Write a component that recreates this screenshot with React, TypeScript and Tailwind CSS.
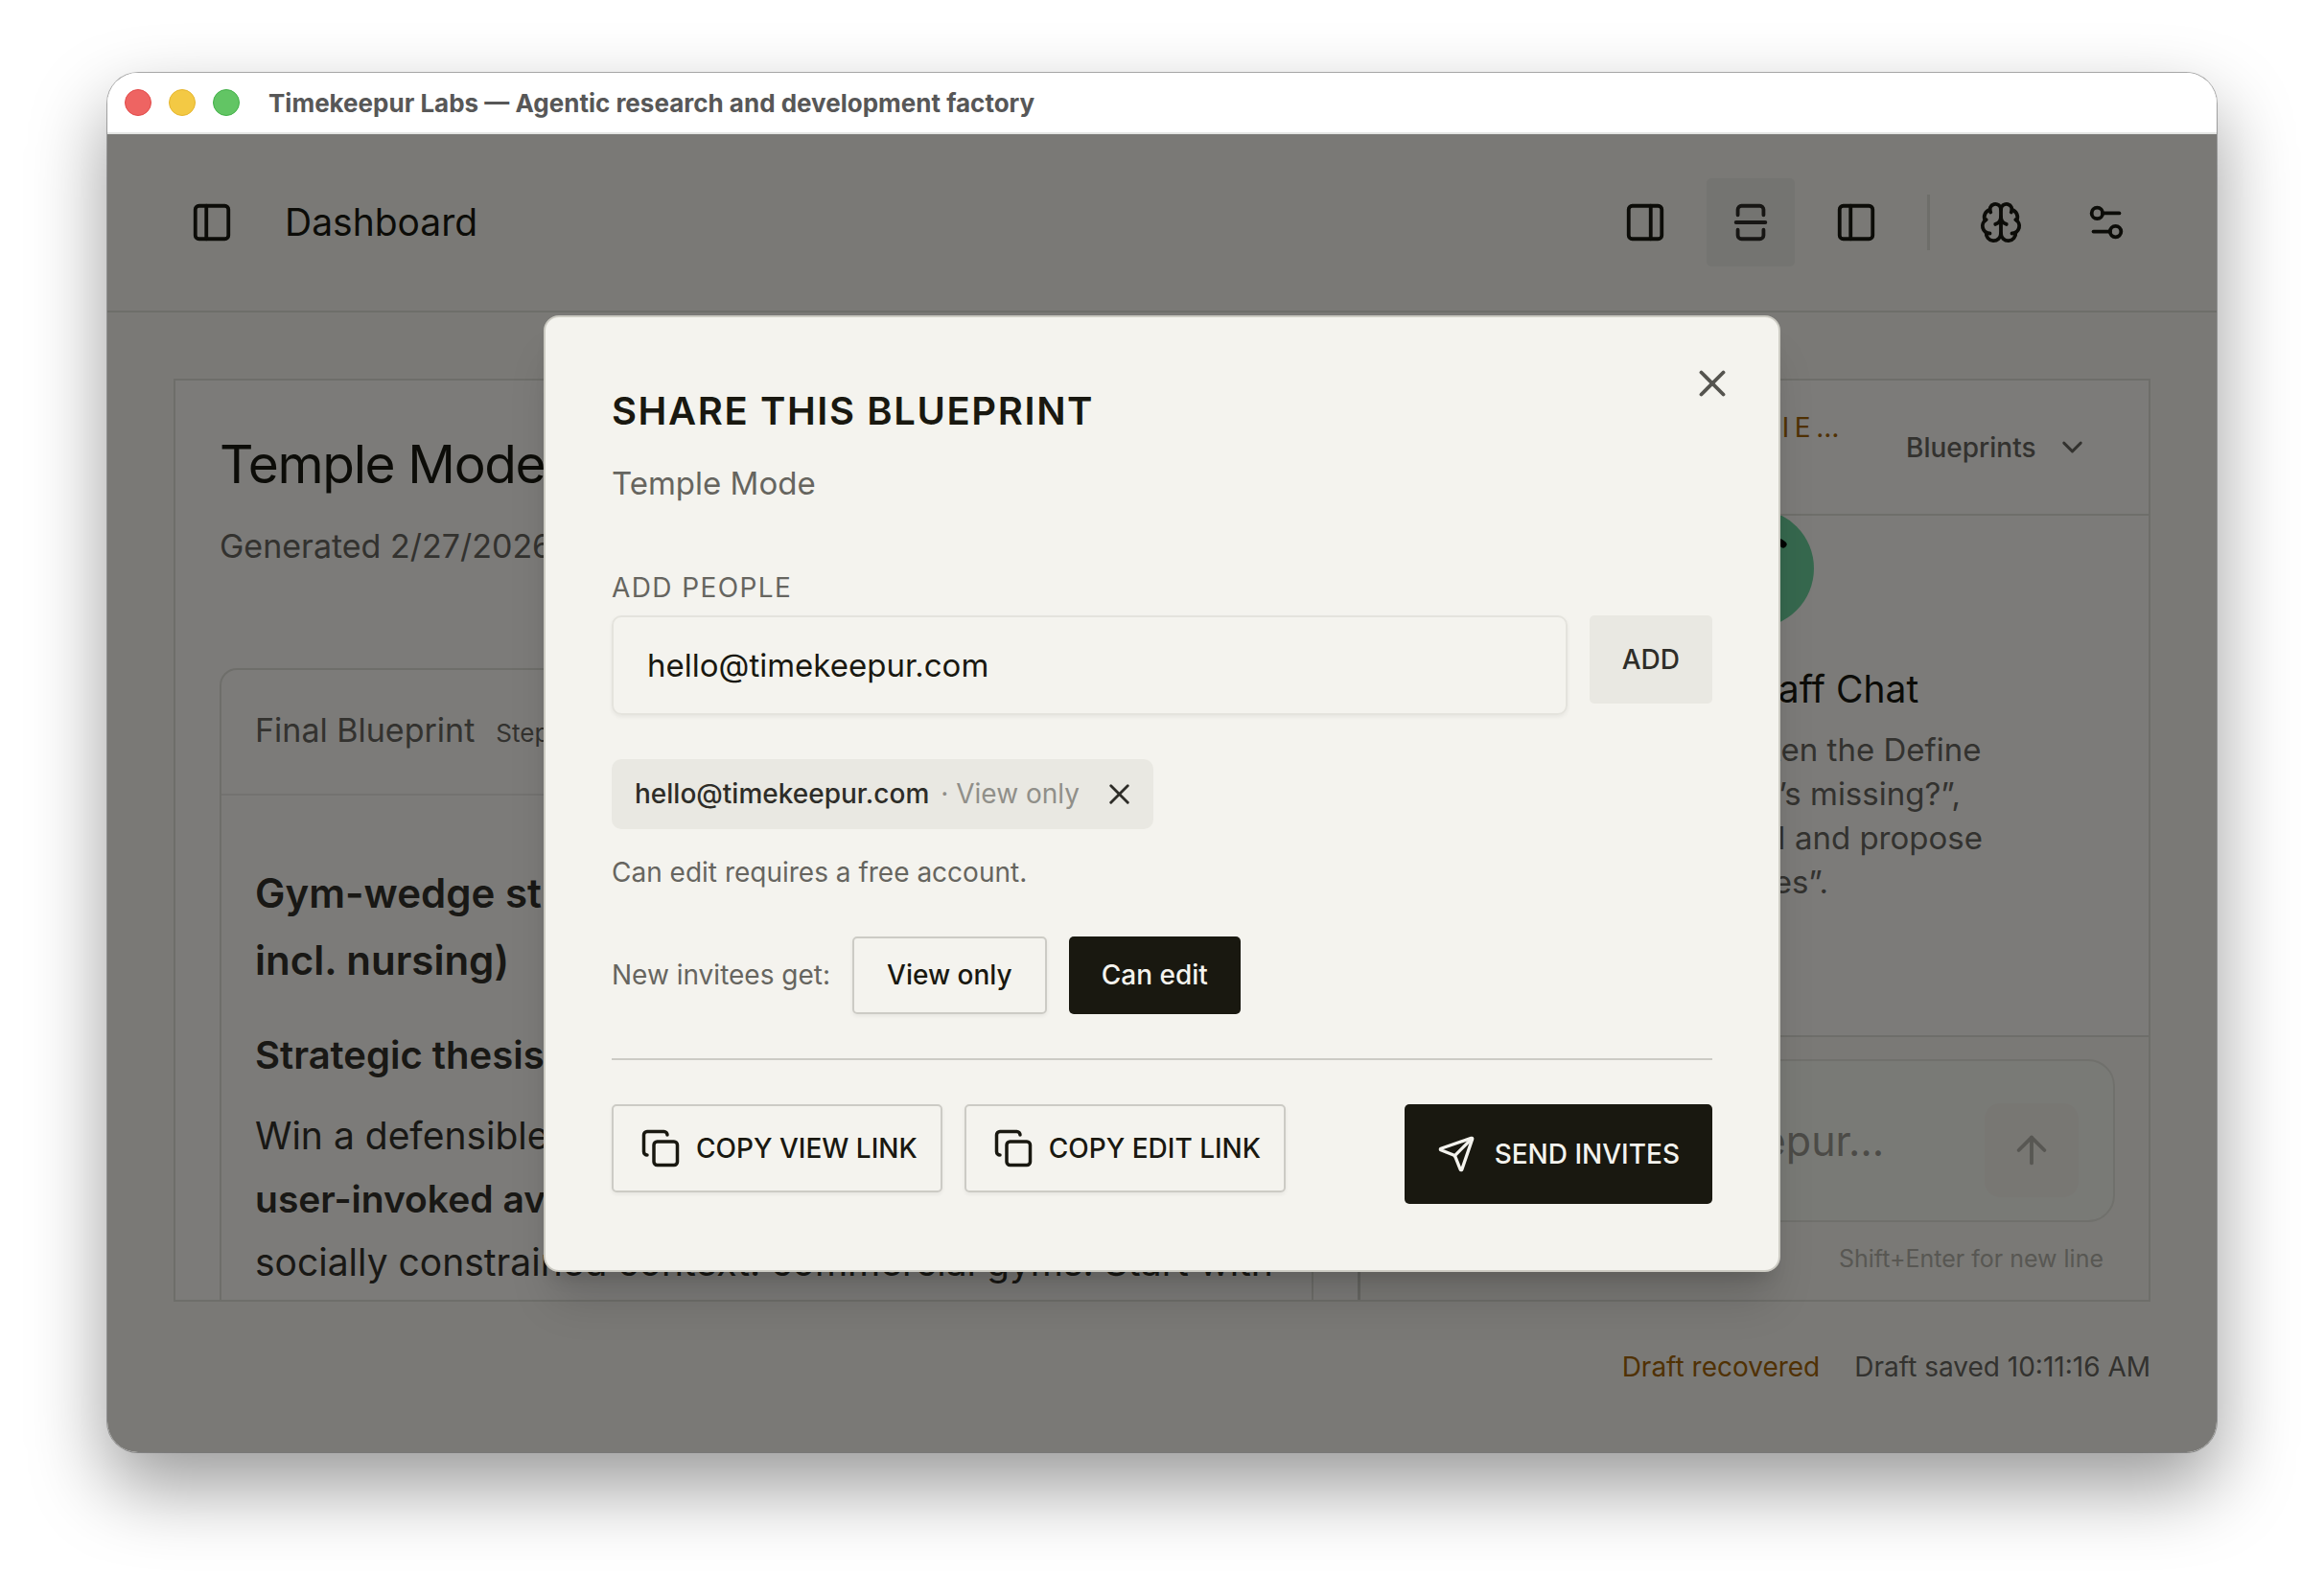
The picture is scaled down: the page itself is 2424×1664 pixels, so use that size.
import React, { useState } from 'react';
import {
  ArrowUp,
  Brain,
  ChevronDown,
  Copy,
  PanelLeft,
  PanelRight,
  Send,
  Settings2,
  SquareSplitVertical,
  X
} from 'lucide-react';

const TitleBar = () => (
  <div className="flex h-16 shrink-0 items-center border-b-2 border-[#e4e5e3] bg-white pl-[18px]">
    <div className="flex gap-[18px]">
      <span className="size-7 rounded-full border border-[#e24b4a] bg-[#ee6462]"></span>
      <span className="size-7 rounded-full border border-[#e5b52e] bg-[#f3c944]"></span>
      <span className="size-7 rounded-full border border-[#43b049] bg-[#62c564]"></span>
    </div>
    <p className="ml-[30px] text-[26px] font-bold text-[#575757]">
      Timekeepur Labs — Agentic research and development factory
    </p>
  </div>
);

const IconButton = ({ icon: Icon, label, active }: any) => (
  <button
    aria-label={label}
    className={`flex size-[92px] items-center justify-center rounded-[5px] ${active ? 'bg-[#e9e8e2] text-[#2e2d28]' : 'text-[#191810]'}`}
  >
    <Icon size={46} />
  </button>
);

const Header = () => (
  <header className="flex h-[186px] shrink-0 items-center justify-between border-b-2 border-[#dddcd5] pl-[63px] pr-[69px]">
    <div className="flex items-center gap-[30px]">
      <IconButton icon={PanelLeft} label="Toggle sidebar" />
      <h1 className="text-[39px] text-[#191810]">Dashboard</h1>
    </div>
    <div className="flex items-center gap-[18px]">
      <IconButton icon={PanelRight} label="Show right panel" />
      <IconButton icon={SquareSplitVertical} label="Split view" active />
      <IconButton icon={PanelLeft} label="Show left panel" />
      <span className="mx-[10px] h-[58px] w-[3px] bg-[#dddcd5]"></span>
      <IconButton icon={Brain} label="Memory" />
      <IconButton icon={Settings2} label="Settings" />
    </div>
  </header>
);

const Blueprint = () => (
  <section className="flex min-h-0 flex-col overflow-hidden px-[46px] pt-[55px]">
    <h2 className="text-[55px] leading-[64px] tracking-tight text-[#191810]">Temple Mode</h2>
    <p className="mt-[31px] text-[34px] leading-[46px] text-[#66655f]">Generated 2/27/2026</p>

    <div className="mt-[104px] min-h-0 flex-1 overflow-hidden rounded-t-[18px] border-2 border-b-0 border-[#dddcd5]">
      <div className="flex items-baseline gap-[22px] border-b-2 border-[#e6e5e0] px-[35px] py-10 leading-[46px] text-[#66655f]">
        <span className="text-[34px]">Final Blueprint</span>
        <span className="text-[26px]">Step 4</span>
      </div>
      <div className="px-[35px] pt-[67px] text-[#32312a]">
        <h3 className="text-[42px] font-semibold leading-[70px]">
          <span className="block">Gym-wedge strategy (prayer,</span>
          <span className="block">incl. nursing)</span>
        </h3>
        <h4 className="mt-[34px] text-[40px] font-semibold leading-[60px]">Strategic thesis</h4>
        <p className="mt-[21px] whitespace-nowrap text-[39px] leading-[66px]">
          <span className="block">Win a defensible wedge with a</span>
          <strong className="block font-semibold">user-invoked avatar</strong>
          <span className="block">socially constrained context: commercial gyms. Start with</span>
        </p>
      </div>
    </div>
  </section>
);

const StaffAvatar = () => (
  <svg viewBox="0 0 124 124" className="size-[124px] shrink-0" fill="none" aria-hidden="true">
    <circle cx="62" cy="62" r="62" fill="#6cd09c" />
    <path d="M68 35c7-4 17-4 24 2" stroke="#000" strokeWidth="7" strokeLinecap="round" />
    <path d="M31 37c7-6 17-6 24-2" stroke="#000" strokeWidth="7" strokeLinecap="round" />
  </svg>
);

const StaffChat = () => (
  <section className="flex min-h-0 flex-col border-l-3 border-[#cfcec6]">
    <div className="flex h-[141px] shrink-0 items-center gap-16 border-b-2 border-[#dddcd5] pl-9 pr-[62px]">
      <div className="min-w-0 flex-1 text-right">
        <p className="text-[28px] leading-10 tracking-[0.2em] text-[#a16207]">ARCHIE…</p>
        <div className="h-[42px]"></div>
      </div>
      <label className="flex items-center gap-5 text-[#66655f]">
        <select aria-label="Section" className="appearance-none bg-transparent text-[28px] font-medium">
          <option>Blueprints</option>
        </select>
        <ChevronDown size={35} />
      </label>
    </div>

    <div className="flex min-h-0 flex-1 flex-col items-center justify-center overflow-hidden">
      <div className="flex flex-col items-center pb-[144px] text-center">
        <StaffAvatar />
        <h3 className="mt-9 text-[39px] leading-[56px] text-[#191810]">Chief of Staff Chat</h3>
        <p className="mt-3 text-[33px] leading-[46px] text-[#66655f]">
          <span className="block">Ask them to tighten the Define</span>
          <span className="block">sections, “what’s missing?”,</span>
          <span className="block">then “critique v1.1 and propose</span>
          <span className="block">changes”.</span>
        </p>
      </div>
    </div>

    <div className="h-[276px] shrink-0 border-t-2 border-[#dddcd5] bg-[#f4f3ec] px-[35px] pt-[23px]">
      <div className="flex h-[170px] items-center rounded-[28px] border-2 border-[#e0e0d8] bg-[#f3f5ed] px-9">
        <input
          aria-label="Message"
          placeholder="Message Timekeepur…"
          className="min-w-0 flex-1 bg-transparent text-[43px] placeholder:text-[#99978f]"
        />
        <button aria-label="Send message" className="mb-6 flex size-[98px] items-center justify-center self-end rounded-2xl bg-[#f1eee7] text-[#b0afa6]">
          <ArrowUp size={46} />
        </button>
      </div>
      <p className="mt-[18px] pr-3 text-right text-[25px] leading-10 text-[#b0afa6]">Shift+Enter for new line</p>
    </div>
  </section>
);

const buttonBase = 'flex items-center justify-center rounded-[5px] text-[28px] font-medium';
const outline = 'border-2 border-[#cccbc5] text-[#191810] shadow-[0_2px_4px_rgba(0,0,0,0.06)]';

const ShareDialog = () => {
  const [email, setEmail] = useState('hello@timekeepur.com');

  return (
    <div
      role="dialog"
      aria-labelledby="share-title"
      className="relative w-full max-w-[1290px] rounded-2xl border-2 border-[#cccbc3] bg-[#f4f3ee] p-[69px] shadow-[0_38px_48px_-10px_rgba(0,0,0,0.14),0_15px_19px_-11px_rgba(0,0,0,0.14)]"
    >
      <button aria-label="Close" className="absolute right-[46px] top-[46px] text-[#55544f]">
        <X size={46} />
      </button>

      <h2 id="share-title" className="text-[40px] font-semibold leading-[58px] tracking-[0.04em] text-[#191810]">
        SHARE THIS BLUEPRINT
      </h2>
      <p className="mt-[22px] text-[33px] leading-[48px] text-[#66655f]">Temple Mode</p>

      <label htmlFor="email" className="mt-[65px] block text-[28px] leading-10 tracking-wider text-[#66655f]">
        ADD PEOPLE
      </label>
      <div className="mt-[9px] flex items-start gap-[23px]">
        <input
          id="email"
          type="email"
          value={email}
          onChange={(e) => setEmail(e.target.value)}
          className="h-[104px] min-w-0 flex-1 rounded-[10px] border-2 border-[#e4e3dd] bg-transparent px-[35px] text-[33px] text-[#191810] shadow-[0_2px_4px_rgba(0,0,0,0.06)]"
        />
        <button className={`${buttonBase} h-[92px] bg-[#e9e8e2] px-[34px] text-[#2e2d28]`}>ADD</button>
      </div>

      <div className="mt-[46px] flex">
        <div className="flex h-[73px] items-center rounded-[10px] bg-[#e9e8e2] pl-6 pr-[18px] text-[28px] text-[#2e2d28]">
          <span className="font-medium">hello@timekeepur.com</span>
          <span className="ml-3 text-[#908f89]">· View only</span>
          <button aria-label="Remove hello@timekeepur.com" className="ml-6">
            <X size={35} />
          </button>
        </div>
      </div>
      <p className="mt-[25px] text-[28px] leading-10 text-[#66655f]">Can edit requires a free account.</p>

      <div className="mt-[47px] flex items-center gap-[23px]">
        <span className="text-[28px] text-[#66655f]">New invitees get:</span>
        <button className={`${buttonBase} ${outline} h-[81px] px-[34px]`}>View only</button>
        <button className={`${buttonBase} h-[81px] bg-[#191810] px-[34px] text-[#f4f3ee]`}>Can edit</button>
      </div>

      <div className="mt-[46px] flex items-start gap-[23px] border-t-2 border-[#cccbc5] pt-[46px]">
        <button className={`${buttonBase} ${outline} h-[92px] gap-4 pl-7 pr-6`}>
          <Copy size={42} />
          COPY VIEW LINK
        </button>
        <button className={`${buttonBase} ${outline} h-[92px] gap-4 pl-7 pr-6`}>
          <Copy size={42} />
          COPY EDIT LINK
        </button>
        <button className={`${buttonBase} ml-auto h-[104px] gap-5 bg-[#191810] px-[34px] text-[#f4f3ee]`}>
          <Send size={40} />
          SEND INVITES
        </button>
      </div>
    </div>
  );
};

const App = () => (
  <div className="h-screen bg-white px-28 pb-[149px] pt-[76px] font-['Inter',sans-serif]">
    <div className="flex h-full flex-col overflow-hidden rounded-[32px] shadow-[0_36px_80px_rgba(0,0,0,0.4),0_0_0_1px_rgba(0,0,0,0.3)]">
      <TitleBar />
      <div className="relative flex min-h-0 flex-1 flex-col bg-[#f4f3ec]">
        <Header />
        <main className="flex min-h-0 flex-1 flex-col px-[69px] pt-[69px]">
          <div className="grid min-h-0 flex-1 grid-cols-[minmax(0,1.495fr)_minmax(0,1fr)] border-2 border-[#dddcd5] bg-[#f8f6f2]">
            <Blueprint />
            <StaffChat />
          </div>
          <footer className="flex h-[157px] shrink-0 justify-end gap-9 pt-[47px] text-[28px] leading-[42px]">
            <span className="text-[#a16207]">Draft recovered</span>
            <span className="text-[#66655f]">Draft saved 10:11:16 AM</span>
          </footer>
        </main>

        <div className="absolute inset-0 flex items-center justify-center bg-black/50">
          <ShareDialog />
        </div>
      </div>
    </div>
  </div>
);

export default App;
